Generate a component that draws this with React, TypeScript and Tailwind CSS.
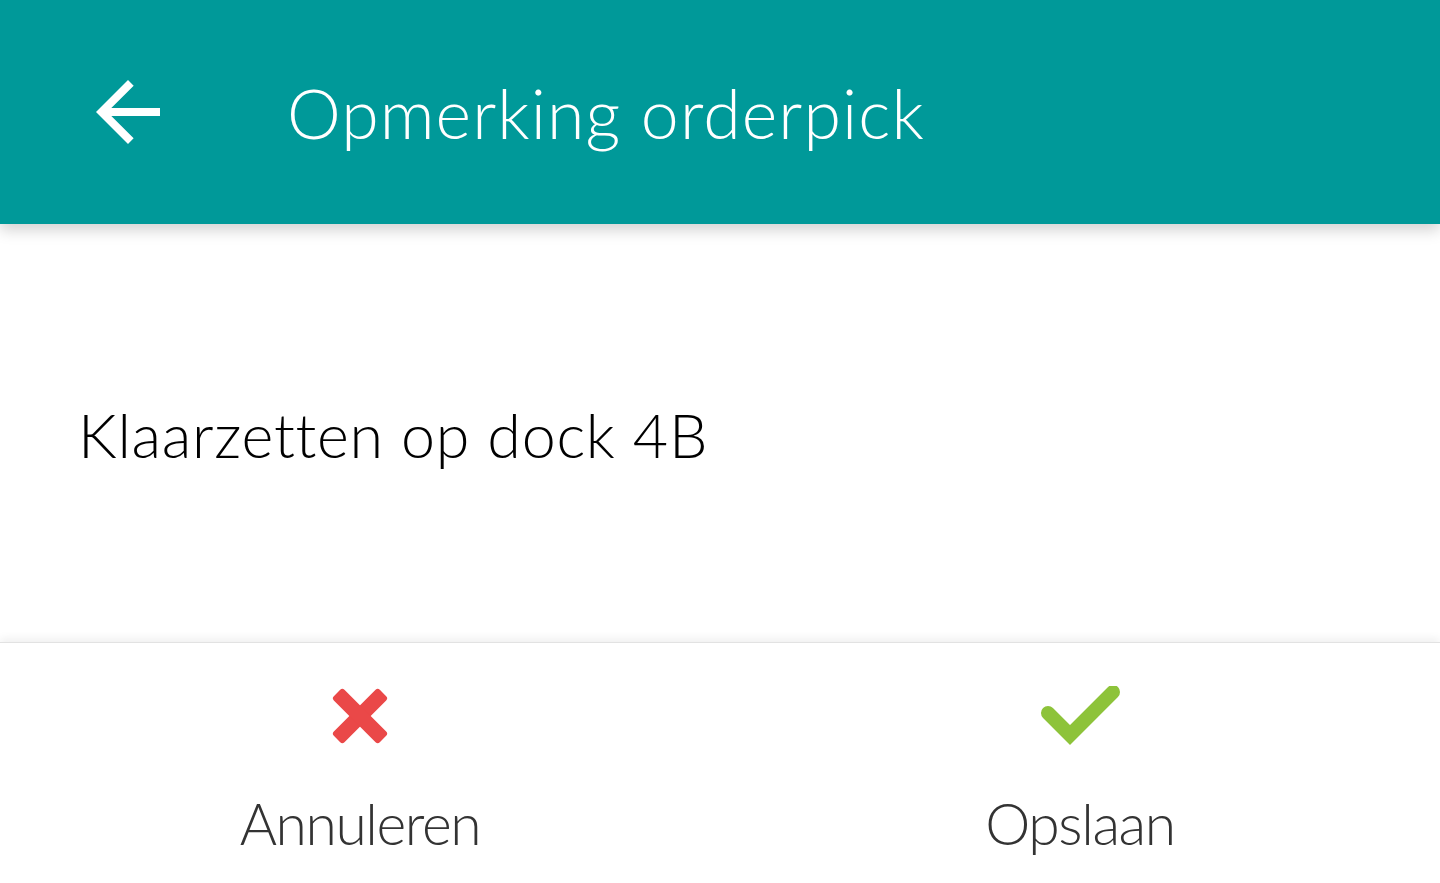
import React from 'react';

const font = { fontFamily: 'Lato, "Open Sans", sans-serif' };

const BackArrow: React.FC = () => (
  <svg width="96" height="96" viewBox="0 0 24 24" fill="#ffffff">
    <path d="M20 11H7.83l5.59-5.59L12 4l-8 8 8 8 1.41-1.41L7.83 13H20v-2z" />
  </svg>
);

const CancelIcon: React.FC = () => (
  <svg width="56" height="56" viewBox="0 0 56 56" fill="#ea4848">
    <rect x="20.5" y="-4.5" width="15" height="65" rx="3" transform="rotate(45 28 28)" />
    <rect x="20.5" y="-4.5" width="15" height="65" rx="3" transform="rotate(-45 28 28)" />
  </svg>
);

const SaveIcon: React.FC = () => (
  <svg width="80" height="60" viewBox="0 0 80 60" fill="none">
    <polyline
      points="8,27 30,49 73,6"
      stroke="#8dc33a"
      strokeWidth="14"
      strokeLinecap="round"
      strokeLinejoin="miter"
    />
  </svg>
);

export default function App() {
  return (
    <div
      className="w-[1440px] h-[883px] flex flex-col bg-white overflow-hidden [font-variant-ligatures:none]"
      style={font}
    >
      <header className="relative z-10 h-[224px] shrink-0 bg-[#009999] flex items-center shadow-[0_6px_14px_rgba(0,0,0,0.18)]">
        <button className="ml-[80px] w-[96px] h-[96px] flex items-center justify-center">
          <BackArrow />
        </button>
        <h1 className="ml-[111px] mt-[2px] text-white text-[68px] font-light leading-none tracking-[1.1px]">
          Opmerking orderpick
        </h1>
      </header>

      <main className="flex-1 px-[78px] pt-[180px]">
        <p className="text-black text-[61px] font-light leading-none tracking-[0.7px]">
          Klaarzetten op dock 4B
        </p>
      </main>

      <footer className="h-[241px] shrink-0 grid grid-cols-2 border-t border-[#e2e2e2] shadow-[0_-4px_8px_rgba(0,0,0,0.06)]">
        <button className="flex flex-col items-center pt-[43px]">
          <div className="h-[60px] flex items-center">
            <CancelIcon />
          </div>
          <span className="mt-[49px] text-[#333333] text-[57px] font-light leading-none tracking-[-1.4px]">
            Annuleren
          </span>
        </button>
        <button className="flex flex-col items-center pt-[43px]">
          <div className="h-[60px] flex items-center">
            <SaveIcon />
          </div>
          <span className="mt-[49px] text-[#333333] text-[57px] font-light leading-none tracking-[-1.4px]">
            Opslaan
          </span>
        </button>
      </footer>
    </div>
  );
}
